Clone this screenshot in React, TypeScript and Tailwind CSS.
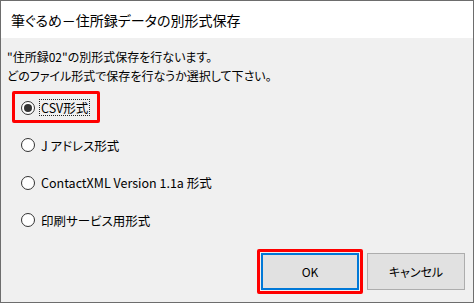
import React from "react";

const font = "font-['Noto_Sans_CJK_JP','Noto_Sans',sans-serif] [font-feature-settings:'palt']";

const options = [
  { id: "csv", label: "CSV形式" },
  { id: "j", label: "J アドレス形式" },
  { id: "xml", label: "ContactXML Version 1.1a 形式" },
  { id: "print", label: "印刷サービス用形式" },
];

const Radio: React.FC<{ checked?: boolean }> = ({ checked }) => (
  <div className="w-[14px] h-[14px] rounded-full border border-[#333333] bg-white flex items-center justify-center shrink-0">
    {checked && <div className="w-[8px] h-[8px] rounded-full bg-[#333333]" />}
  </div>
);

export default function App() {
  return (
    <div className={`w-[474px] h-[303px] border border-[#6d6d6d] bg-[#f0f0f0] flex flex-col text-black ${font}`}>
      <div className="h-[37px] bg-white flex items-center pl-[10px] text-[14px] leading-none">
        筆ぐるめ－住所録データの別形式保存
      </div>
      <div className="flex-1 flex flex-col px-[6px] pt-[9px] text-[12px]">
        <div className="leading-[19px]">"住所録02"の別形式保存を行ないます。</div>
        <div className="leading-[19px]">どのファイル形式で保存を行なうか選択して下さい。</div>
        <div className="mt-[4px] flex flex-col pl-[14px]">
          {options.map((o, i) => (
            <div key={o.id} className="h-[37.5px] flex items-center relative">
              <Radio checked={i === 0} />
              <span
                className={`ml-[4px] px-[1px] leading-[15px] text-[12.5px] border border-dotted ${
                  i === 0 ? "border-[#222222]" : "border-transparent"
                }`}
              >
                {o.label}
              </span>
              {i === 0 && (
                <div className="absolute left-[-9px] top-[2px] w-[88px] h-[32px] border-[3px] border-[#ff0000] rounded-[2px]" />
              )}
            </div>
          ))}
        </div>
        <div className="mt-auto flex justify-end gap-[8px] pr-[2px] pb-[12px]">
          <div className="relative">
            <button className="w-[98px] h-[37px] bg-[#e1e1e1] border-2 border-[#0078d7] text-[12px] flex items-center justify-center">
              OK
            </button>
            <div className="absolute -left-[4px] -top-[4px] -right-[4px] -bottom-[4px] border-[3px] border-[#ff0000] rounded-[2px] pointer-events-none" />
          </div>
          <button className="w-[98px] h-[37px] bg-[#e1e1e1] border border-[#adadad] text-[12px] flex items-center justify-center">
            キャンセル
          </button>
        </div>
      </div>
    </div>
  );
}
